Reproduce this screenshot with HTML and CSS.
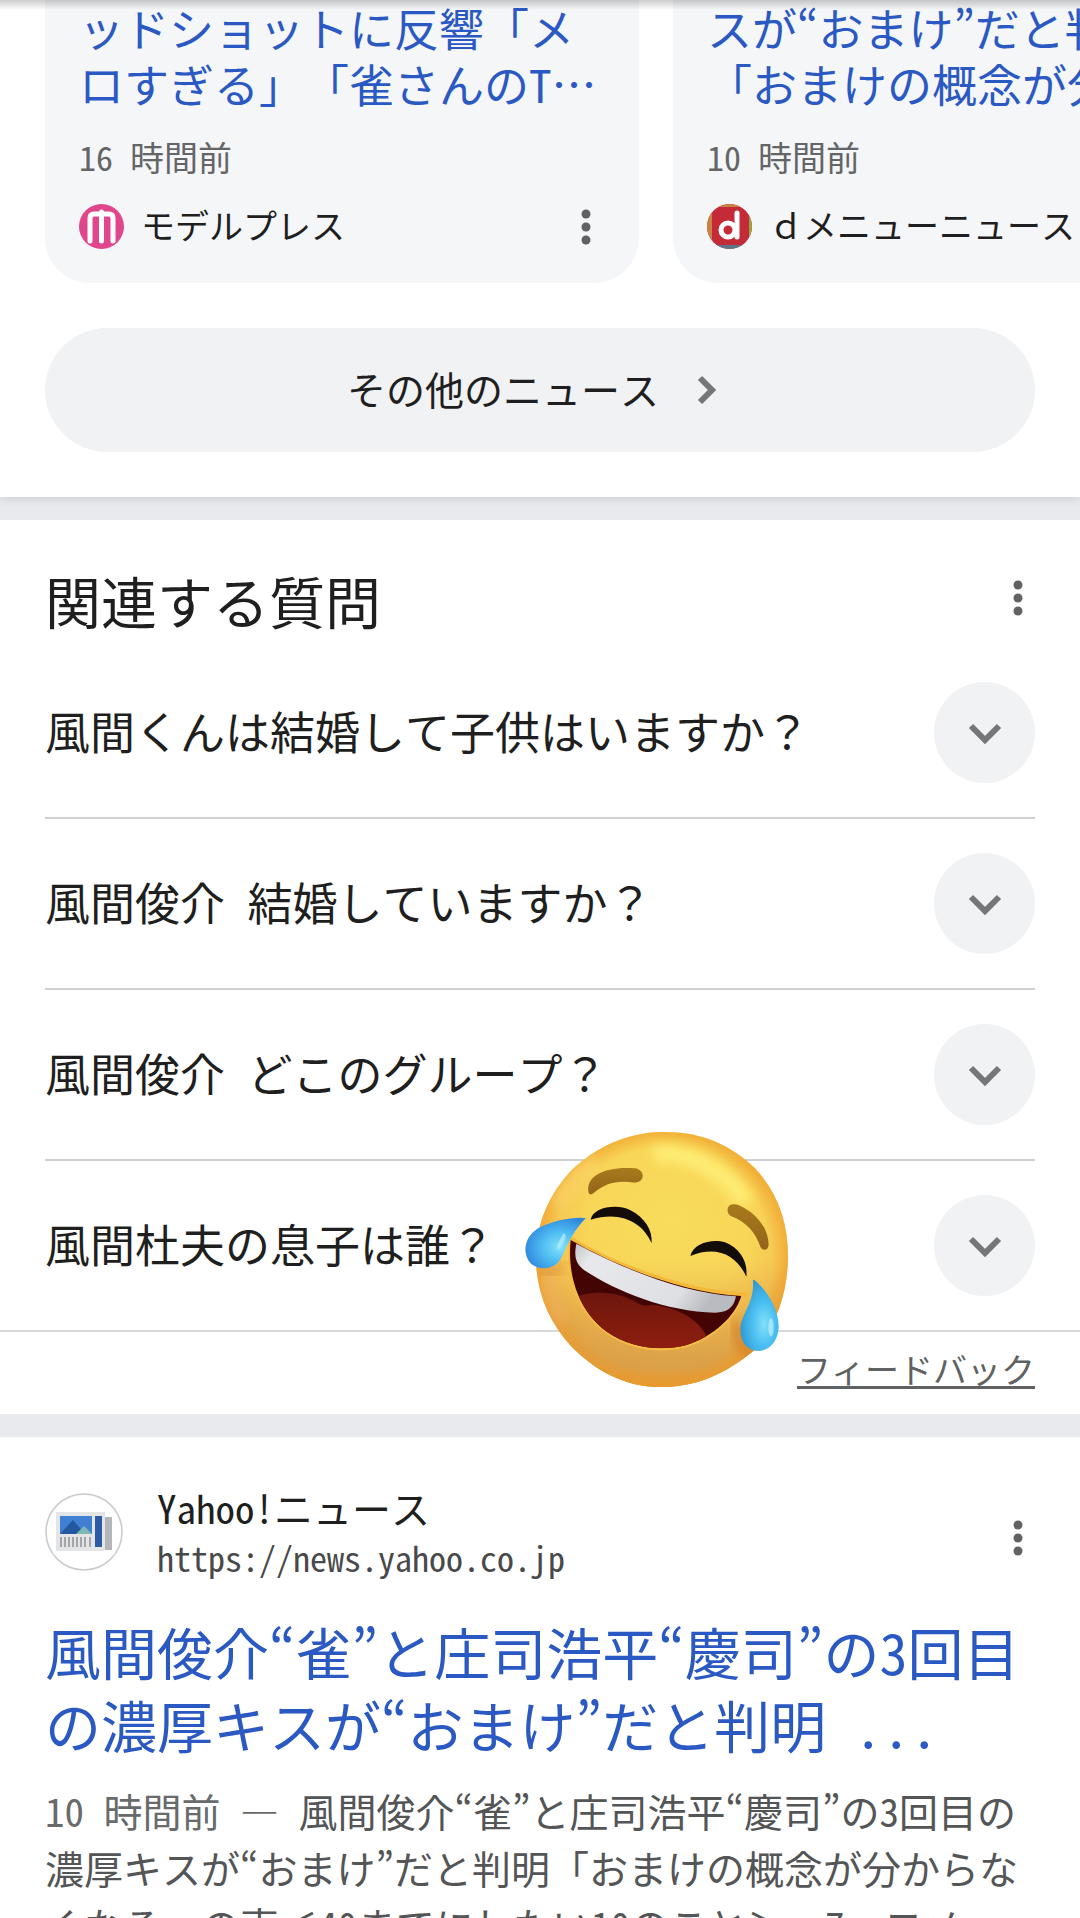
FILE: index.html
```html
<!DOCTYPE html>
<html lang="ja">
<head>
<meta charset="utf-8">
<meta name="viewport" content="width=device-width, initial-scale=1">
<title>風間俊介 - 検索</title>
<link rel="stylesheet" href="styles.css">
</head>
<body>
<main class="page">
  <section class="panel news">
    <div class="carousel">
      <article class="card">
        <a class="card-title" href="#">ッドショットに反響「メ<br>ロすぎる」「雀さんのT…</a>
        <p class="card-time">16 時間前</p>
        <div class="card-source">
          <svg class="source-icon" viewBox="0 0 45 45" aria-hidden="true">
            <circle cx="22.500" cy="22.500" r="22.500" fill="#e0468c"/>
            <path d="M11 37V14q0-4 4-4h15q4 0 4 4v23M22.500 8v29" fill="none" stroke="#fff" stroke-width="5" stroke-linecap="round"/>
          </svg>
          <span>モデルプレス</span>
          <button class="more" type="button" aria-label="その他の操作"><svg viewBox="0 0 10 36"><circle cx="5" cy="5" r="4.500"/><circle cx="5" cy="18" r="4.500"/><circle cx="5" cy="31" r="4.500"/></svg></button>
        </div>
      </article>
      <article class="card">
        <a class="card-title" href="#">スが“おまけ”だと判明<br>「おまけの概念が分か…</a>
        <p class="card-time">10 時間前</p>
        <div class="card-source">
          <svg class="source-icon" viewBox="0 0 45 45" aria-hidden="true">
            <defs><clipPath id="disc"><circle cx="22.500" cy="22.500" r="22.500"/></clipPath></defs>
            <g clip-path="url(#disc)">
              <rect width="45" height="45" fill="#c42a38"/>
              <path d="M0 0h5v45H0zM0 0h45v3H0z" fill="#c98345"/>
              <path d="M42 3h3v38h-3z" fill="#9aa33c"/>
              <path d="M0 41h45v4H0z" fill="#5d7586"/>
              <circle cx="21" cy="26" r="7" fill="none" stroke="#fff" stroke-width="5"/>
              <path d="M30 9v24" stroke="#fff" stroke-width="5" stroke-linecap="round"/>
            </g>
          </svg>
          <span>ｄメニューニュース</span>
        </div>
      </article>
    </div>
    <button class="more-news" type="button">
      <span>その他のニュース</span>
      <svg class="chevron-right" viewBox="0 0 20 30" aria-hidden="true"><path d="M3 3l12 12L3 27"/></svg>
    </button>
  </section>

  <section class="panel questions">
    <header class="questions-head">
      <h2>関連する質問</h2>
      <button class="more" type="button" aria-label="この結果について"><svg viewBox="0 0 10 36"><circle cx="5" cy="5" r="4.500"/><circle cx="5" cy="18" r="4.500"/><circle cx="5" cy="31" r="4.500"/></svg></button>
    </header>
    <ul class="question-list">
      <li><button class="question" type="button" aria-expanded="false"><span class="label">風間くんは結婚して子供はいますか？</span><span class="toggle"><svg viewBox="0 0 34 22"><path d="M3 3l14 14L31 3"/></svg></span></button></li>
      <li><button class="question" type="button" aria-expanded="false"><span class="label">風間俊介 結婚していますか？</span><span class="toggle"><svg viewBox="0 0 34 22"><path d="M3 3l14 14L31 3"/></svg></span></button></li>
      <li><button class="question" type="button" aria-expanded="false"><span class="label">風間俊介 どこのグループ？</span><span class="toggle"><svg viewBox="0 0 34 22"><path d="M3 3l14 14L31 3"/></svg></span></button></li>
      <li><button class="question" type="button" aria-expanded="false"><span class="label">風間杜夫の息子は誰？</span><span class="toggle"><svg viewBox="0 0 34 22"><path d="M3 3l14 14L31 3"/></svg></span></button></li>
    </ul>
    <footer class="feedback"><a href="#">フィードバック</a></footer>

    <svg class="sticker" viewBox="0 0 900 840" role="img" aria-label="うれし泣きの顔">
      <defs>
        <radialGradient id="face" gradientUnits="userSpaceOnUse" cx="480" cy="300" r="480">
          <stop offset="0" stop-color="#f8dc5c"/><stop offset=".5" stop-color="#f8d658"/><stop offset=".75" stop-color="#f5c552"/><stop offset="1" stop-color="#e8a23e"/>
        </radialGradient>
        <radialGradient id="rim" gradientUnits="userSpaceOnUse" cx="455" cy="418" r="385">
          <stop offset=".86" stop-color="#f09a20" stop-opacity="0"/><stop offset="1" stop-color="#ee9a24" stop-opacity=".6"/>
        </radialGradient>
        <linearGradient id="chin" x1="0" y1="0" x2="0" y2="1">
          <stop offset=".5" stop-color="#dfa045" stop-opacity="0"/><stop offset=".88" stop-color="#d99f4a" stop-opacity=".9"/><stop offset="1" stop-color="#e8942c"/>
        </linearGradient>
        <linearGradient id="brow" x1="0" y1="0" x2="0" y2="1"><stop offset="0" stop-color="#a87a1c"/><stop offset="1" stop-color="#94641b"/></linearGradient>
        <linearGradient id="teeth" x1="0" y1="0" x2="1" y2=".3"><stop offset="0" stop-color="#c4c6cb"/><stop offset=".15" stop-color="#e8e9ec"/><stop offset=".8" stop-color="#dddfe2"/><stop offset="1" stop-color="#b9bbc0"/></linearGradient>
        <linearGradient id="tongue" x1="0" y1="0" x2="0" y2="1"><stop offset="0" stop-color="#6e160c"/><stop offset="1" stop-color="#942010"/></linearGradient>
        <radialGradient id="tearL" cx=".58" cy=".58" r=".62"><stop offset="0" stop-color="#86e2fa"/><stop offset=".45" stop-color="#52bff3"/><stop offset="1" stop-color="#2e86dc"/></radialGradient>
        <radialGradient id="tearR" cx=".62" cy=".62" r=".65"><stop offset="0" stop-color="#82e0fb"/><stop offset=".5" stop-color="#48bdf0"/><stop offset="1" stop-color="#2f96cf"/></radialGradient>
        <filter id="soft" x="-30%" y="-30%" width="160%" height="160%"><feGaussianBlur stdDeviation="18"/></filter>
        <clipPath id="faceClip"><path d="M455 36C570 34 660 72 735 145C805 220 835 310 834 415C832 520 800 605 745 680C665 750 570 802 450 801C340 800 255 750 185 680C115 605 76 510 78 405C80 310 115 225 185 150C260 80 350 38 455 36Z"/></clipPath>
        <clipPath id="mouthClip"><path d="M182 360C330 445 530 520 694 528C675 590 610 650 530 675C450 695 365 685 290 635C215 580 170 480 182 360Z"/></clipPath>
      </defs>
      <g clip-path="url(#faceClip)">
        <rect width="900" height="840" fill="url(#face)"/>
        <rect width="900" height="840" fill="url(#chin)"/>
        <rect width="900" height="840" fill="url(#rim)"/>
        <path d="M430 100C550 95 640 150 710 250" fill="none" stroke="#fff27a" stroke-width="54" opacity=".8" filter="url(#soft)"/>
        <path d="M140 260C160 200 210 150 260 120" fill="none" stroke="#ffe07a" stroke-width="40" opacity=".6" filter="url(#soft)"/>
        <path d="M110 430C110 520 130 560 160 610" fill="none" stroke="#f2b870" stroke-width="40" opacity=".5" filter="url(#soft)"/>
        <path d="M90 445C115 470 145 455 160 430" fill="none" stroke="#cf7a20" stroke-width="20" opacity=".6" filter="url(#soft)"/>
        <path d="M680 600C680 660 700 700 745 705" fill="none" stroke="#cf741c" stroke-width="26" opacity=".8" filter="url(#soft)"/>
      </g>
      <path d="M176 352C320 440 530 518 712 524" fill="none" stroke="#f3b93a" stroke-width="12"/>
      <path d="M182 360C170 480 215 580 290 635C365 685 450 695 530 675C610 650 675 590 694 528" fill="none" stroke="#f7bd45" stroke-width="12"/>
      <g clip-path="url(#mouthClip)">
        <rect x="160" y="340" width="560" height="360" fill="#430404"/>
        <path d="M180 540C240 505 330 515 385 550Q402 562 425 554C500 560 570 600 590 650L500 720H250Z" fill="url(#tongue)"/>
      </g>
      <path d="M199 371C340 447 520 520 678 529C672 560 655 578 615 578C470 575 320 515 222 450C195 430 192 405 199 371Z" fill="url(#teeth)"/>
      <path d="M236 219C225 165 290 138 375 145C405 149 407 186 375 188C320 180 285 190 250 220Q241 227 236 219Z" fill="url(#brow)"/>
      <path d="M654 278C647 253 671 248 690 257C740 280 775 325 776 374C774 394 758 393 751 380C735 335 710 310 672 292Q658 287 654 278Z" fill="url(#brow)"/>
      <path d="M242 299C248 262 320 250 360 270C405 293 428 330 425 370C400 310 335 270 242 299Z" fill="#130c08"/>
      <path d="M541 408C550 368 610 355 645 367C690 385 714 425 709 470C680 405 620 375 541 408Z" fill="#130c08"/>
      <path d="M227 295C205 288 130 300 90 322C38 350 37 405 64 432C88 451 130 450 150 420C172 385 175 350 227 295Z" fill="url(#tearL)"/>
      <path d="M733 480C760 500 806 560 806 620C805 665 775 693 745 693C710 692 690 665 691 625C697 575 732 550 729 486Q728 477 733 480Z" fill="url(#tearR)"/>
      <path d="M160 340Q178 345 150 385Q140 395 142 375Z" fill="#b5eefb" opacity=".7"/>
      <ellipse cx="783" cy="622" rx="8" ry="28" fill="#bdf1fd" opacity=".7"/>
    </svg>
  </section>

  <article class="panel result">
    <header class="result-head">
      <svg class="favicon" viewBox="0 0 78 78" aria-hidden="true">
        <circle cx="39" cy="39" r="38" fill="#fff" stroke="#c9cacd" stroke-width="1.500"/>
        <path d="M57 24h10v33H57z" fill="#b4b5b8"/>
        <path d="M11 19h49v39H11z" fill="#e4e5e7"/>
        <path d="M15 23h32v18H15z" fill="#3f80d2"/>
        <path d="M15 41l13-14 12 14z" fill="#23589f"/>
        <path d="M31 41l8-8 8 8z" fill="#7fb8b5"/>
        <path d="M50 23h7v31h-7z" fill="#2c5ba4"/>
        <path d="M16 44v10M20 44v10M24 44v10M28 44v10M32 44v10M36 44v10M40 44v10M45 44v10" stroke="#a5a6a9" stroke-width="2"/>
      </svg>
      <div class="site">
        <span class="site-name">Yahoo!ニュース</span>
        <cite class="site-url">https://news.yahoo.co.jp</cite>
      </div>
      <button class="more" type="button" aria-label="この結果について"><svg viewBox="0 0 10 36"><circle cx="5" cy="5" r="4.500"/><circle cx="5" cy="18" r="4.500"/><circle cx="5" cy="31" r="4.500"/></svg></button>
    </header>
    <h3><a href="#">風間俊介“雀”と庄司浩平“慶司”の3回目の濃厚キスが“おまけ”だと判明 ...</a></h3>
    <p class="snippet"><span class="date">10 時間前 — </span>風間俊介“雀”と庄司浩平“慶司”の3回目の<br>濃厚キスが“おまけ”だと判明「おまけの概念が分からな<br>くなる」の声＜40までにしたい10のこと＞　7　コメ</p>
  </article>
</main>
</body>
</html>
```
FILE: styles.css
```css
* {
  box-sizing: border-box;
}

body {
  margin: 0;
  background: #e8eaed;
  color: #1f1f1f;
  font-family: "Noto Sans Mono CJK JP", "Noto Sans CJK JP", sans-serif;
  text-spacing-trim: space-all;
}

h2, h3, p, ul {
  margin: 0;
  padding: 0;
  font-weight: 400;
}

ul {
  list-style: none;
}

a {
  color: #2b59c3;
  text-decoration: none;
}

button {
  border: 0;
  padding: 0;
  background: none;
  color: inherit;
  font: inherit;
  cursor: pointer;
}

.page {
  display: flex;
  flex-direction: column;
  gap: 23px;
  height: 100vh;
  overflow: hidden;
}

.page::before {
  content: "";
  position: absolute;
  inset: 0 0 auto;
  height: 10px;
  background: linear-gradient(rgba(0, 0, 0, .2), rgba(0, 0, 0, 0));
}

.panel {
  flex: none;
  background: #fff;
}

.more {
  display: flex;
  justify-content: center;
  width: 34px;
}

.more svg {
  width: 10px;
  height: 36px;
  fill: #606162;
}

/* News carousel */
.news {
  padding-bottom: 45px;
  box-shadow: 0 2px 8px rgba(60, 64, 67, .16);
}

.carousel {
  display: flex;
  gap: 34px;
  padding-left: 45px;
  overflow: hidden;
}

.card {
  flex: none;
  width: 594px;
  padding: 0 34px 34px;
  border-radius: 0 0 45px 45px;
  background: #f5f6f8;
}

.card-title {
  display: block;
  font-size: 45px;
  line-height: 56px;
  white-space: nowrap;
}

.card-time {
  margin-top: 22px;
  color: #646566;
  font-size: 34px;
  line-height: 46px;
}

.card-source {
  display: flex;
  align-items: center;
  gap: 17px;
  height: 45px;
  margin-top: 24px;
  font-size: 34px;
  line-height: 45px;
  white-space: nowrap;
}

.card-source span {
  padding-bottom: 4px;
}

.card-source .more {
  margin-left: auto;
  margin-right: 2px;
}

.source-icon {
  width: 45px;
  height: 45px;
}

.more-news {
  display: flex;
  align-items: center;
  justify-content: center;
  gap: 38px;
  width: calc(100% - 90px);
  height: 124px;
  margin: 45px 45px 0;
  padding-right: 16px;
  border-radius: 62px;
  background: #f1f2f4;
  font-size: 39px;
}

.more-news span,
.label {
  padding-bottom: 4px;
}

.chevron-right {
  width: 20px;
  height: 30px;
}

.chevron-right path,
.toggle path {
  fill: none;
  stroke: #747677;
  stroke-width: 6;
}

/* Related questions */
.questions {
  position: relative;
}

.questions-head {
  display: flex;
  justify-content: space-between;
  padding: 44px 0 12px 45px;
}

.questions-head h2 {
  font-size: 56px;
  line-height: 72px;
}

.questions-head .more,
.result-head .more {
  margin-right: 45px;
}

.questions-head .more {
  padding-top: 16px;
}

.question-list {
  border-bottom: 2px solid #d6d7d9;
}

.question-list li {
  margin: 0 45px;
}

.question-list li + li {
  border-top: 2px solid #cfd0d2;
}

.question {
  display: flex;
  align-items: center;
  justify-content: space-between;
  width: 100%;
  padding: 34px 0;
  font-size: 45px;
  text-align: left;
}

.toggle {
  display: flex;
  align-items: center;
  justify-content: center;
  width: 101px;
  height: 101px;
  padding-top: 2px;
  border-radius: 50%;
  background: #f1f2f4;
}

.toggle svg {
  width: 34px;
  height: 22px;
}

.feedback {
  padding: 14px 45px 22px;
  text-align: right;
  font-size: 34px;
  line-height: 46px;
}

.feedback a {
  color: #606162;
  text-decoration: underline;
  text-decoration-thickness: 3px;
  text-underline-offset: 3px;
}

.sticker {
  position: absolute;
  top: 600px;
  left: 510px;
  width: 300px;
  height: 280px;
}

/* Web result */
.result {
  padding-top: 42px;
}

.result-head {
  display: flex;
  align-items: center;
  padding-left: 45px;
}

.favicon {
  width: 78px;
  height: 78px;
  margin-top: 4px;
}

.site {
  display: flex;
  flex: 1;
  flex-direction: column;
  margin-left: 34px;
}

.site-name {
  font-size: 39px;
  line-height: 56px;
}

.site-url {
  color: #48494b;
  font-size: 34px;
  font-style: normal;
  line-height: 45px;
}

.result-head .more {
  padding-top: 16px;
}

.result h3 {
  margin: 34px 45px 0;
  font-size: 56px;
  line-height: 73px;
}

.snippet {
  margin: 22px 45px 0;
  color: #545557;
  font-size: 39px;
  line-height: 57px;
  white-space: nowrap;
}

.date {
  color: #686a6c;
}
```
